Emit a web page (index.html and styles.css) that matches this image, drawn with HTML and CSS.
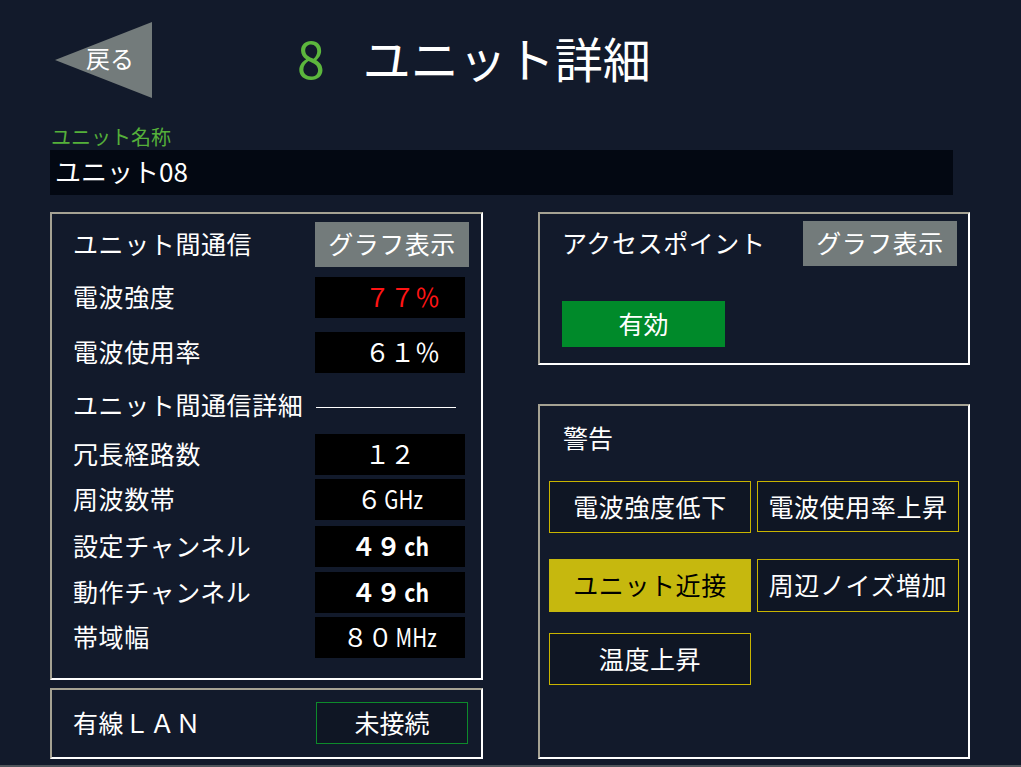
FILE: index.html
```html
<!DOCTYPE html>
<html lang="ja">
<head>
<meta charset="utf-8">
<title>ユニット詳細</title>
<link rel="stylesheet" href="styles.css">
</head>
<body>
<div class="page">
  <header class="header">
    <button class="back"><span class="back-text">戻る</span></button>
    <h1 class="title"><span class="title-num">8</span><span class="title-name">ユニット詳細</span></h1>
  </header>

  <section class="name-field">
    <div class="field-label">ユニット名称</div>
    <div class="field-box">ユニット08</div>
  </section>

  <main class="columns">
    <div class="col col-left">
      <section class="panel panel-comm">
        <div class="row row-head">
          <span class="label">ユニット間通信</span>
          <button class="btn-gray">グラフ表示</button>
        </div>
        <div class="row row-a">
          <span class="label">電波強度</span>
          <span class="value right red">７７％</span>
        </div>
        <div class="row row-b">
          <span class="label">電波使用率</span>
          <span class="value right">６１％</span>
        </div>
        <div class="row row-sub">
          <span class="label">ユニット間通信詳細</span>
          <span class="rule"></span>
        </div>
        <div class="row row-c">
          <span class="label">冗長経路数</span>
          <span class="value">１２</span>
        </div>
        <div class="row row-d">
          <span class="label">周波数帯</span>
          <span class="value">６<span class="unit">GHz</span></span>
        </div>
        <div class="row row-e">
          <span class="label">設定チャンネル</span>
          <span class="value bold">４９<span class="unit unit-ch">ch</span></span>
        </div>
        <div class="row row-f">
          <span class="label">動作チャンネル</span>
          <span class="value bold">４９<span class="unit unit-ch">ch</span></span>
        </div>
        <div class="row row-g">
          <span class="label">帯域幅</span>
          <span class="value">８０<span class="unit">MHz</span></span>
        </div>
      </section>

      <section class="panel panel-lan">
        <span class="label">有線ＬＡＮ</span>
        <span class="status-box">未接続</span>
      </section>
    </div>

    <div class="col col-right">
      <section class="panel panel-ap">
        <div class="row row-head">
          <span class="label">アクセスポイント</span>
          <button class="btn-gray">グラフ表示</button>
        </div>
        <button class="btn-green">有効</button>
      </section>

      <section class="panel panel-warn">
        <div class="warn-title">警告</div>
        <div class="warn-row warn-row-1">
          <span class="warn">電波強度低下</span>
          <span class="warn warn-short">電波使用率上昇</span>
        </div>
        <div class="warn-row warn-row-2">
          <span class="warn warn-on">ユニット近接</span>
          <span class="warn">周辺ノイズ増加</span>
        </div>
        <div class="warn-row warn-row-3">
          <span class="warn">温度上昇</span>
        </div>
      </section>
    </div>
  </main>
</div>
</body>
</html>
```

FILE: styles.css
```css
html {
  background: #50565c;
}
body {
  margin: 0;
  height: 765px;
  overflow: hidden;
  background: #121a2b;
  color: #ffffff;
  font-family: "Noto Sans CJK JP", "Noto Sans", sans-serif;
}
.page {
  padding: 22px 0 0 50px;
}

/* header */
.header {
  display: flex;
  align-items: center;
  height: 76px;
}
.back {
  position: relative;
  width: 97px;
  height: 76px;
  margin: 0 0 0 5px;
  padding: 0 0 0 31px;
  border: none;
  background: transparent;
  color: #ffffff;
  font-family: inherit;
  font-size: 24px;
  text-align: left;
  display: flex;
  align-items: center;
}
.back::before {
  content: "";
  position: absolute;
  inset: 0;
  background: #737b7b;
  clip-path: polygon(0 50%, 100% 0, 100% 100%);
}
.back-text {
  position: relative;
  line-height: 1;
  margin-bottom: 4px;
}
.title {
  margin: -6px 0 0 145px;
  font-weight: normal;
  display: flex;
  align-items: center;
  line-height: 1;
}
.title-num {
  color: #5cb73d;
  font-size: 50px;
}
.title-name {
  font-size: 48px;
  margin-left: 38px;
}

/* name field */
.name-field {
  margin-top: 27px;
}
.field-label {
  color: #55b03a;
  font-size: 20px;
  line-height: 24px;
  height: 24px;
  padding-left: 1px;
}
.field-box {
  margin-top: 1px;
  width: 903px;
  height: 45px;
  box-sizing: border-box;
  padding: 0 0 3px 5px;
  background: #030812;
  font-size: 26px;
  line-height: 42px;
}

/* columns */
.columns {
  display: grid;
  grid-template-columns: 433px 432px;
  column-gap: 55px;
  margin-top: 17px;
}
.col {
  display: flex;
  flex-direction: column;
}
.col-left {
  gap: 8px;
}
.col-right {
  gap: 39px;
}
.panel {
  box-sizing: border-box;
  border: 2px solid #ffffff;
  border-top-color: #a5a293;
  border-left-color: #a5a293;
}
.label {
  font-size: 25px;
  letter-spacing: 0.6px;
  white-space: nowrap;
  padding-bottom: 3px;
}
.row {
  display: flex;
  align-items: center;
  justify-content: space-between;
}

/* left panel */
.panel-comm {
  height: 468px;
  padding: 8px 12px 0 21px;
}
.row-head {
  height: 45px;
}
.btn-gray {
  width: 154px;
  height: 45px;
  border: none;
  background: #737b7b;
  color: #ffffff;
  font-family: inherit;
  font-size: 25px;
  letter-spacing: 0.5px;
  padding: 0 0 3px;
}
.value {
  width: 150px;
  height: 41px;
  margin-right: 4px;
  background: #000000;
  font-size: 25px;
  line-height: 39px;
  text-align: center;
  white-space: nowrap;
}
.value.right {
  text-align: right;
  padding-right: 25px;
  box-sizing: border-box;
}
.value.red {
  color: #ff1414;
}
.value.bold {
  font-weight: bold;
}
.unit {
  display: inline-block;
  transform: scaleX(0.82);
  margin: 0 -4px 0 -2px;
}
.unit-ch {
  transform: scaleX(0.85);
  margin: 0 -2px 0 1px;
}
.row-a { height: 41px; margin-top: 10px; }
.row-b { height: 41px; margin-top: 14px; }
.row-sub { height: 40px; margin-top: 12px; }
.row-c { height: 41px; margin-top: 9px; }
.row-d { height: 41px; margin-top: 4px; }
.row-e { height: 41px; margin-top: 6px; }
.row-f { height: 41px; margin-top: 5px; }
.row-g { height: 41px; margin-top: 4px; }
.rule {
  width: 140px;
  height: 1px;
  background: #ffffff;
  margin: 4px 13px 0 0;
}

.panel-lan {
  height: 71px;
  display: flex;
  align-items: center;
  justify-content: space-between;
  padding: 0 13px 0 21px;
}
.status-box {
  width: 152px;
  height: 42px;
  box-sizing: border-box;
  border: 1px solid #0d8a2b;
  background: #0f1624;
  font-size: 25px;
  line-height: 38px;
  text-align: center;
  margin-top: -2px;
}

/* right panels */
.panel-ap {
  height: 153px;
  padding: 7px 11px 0 22px;
}
.btn-green {
  display: block;
  width: 163px;
  height: 46px;
  margin-top: 35px;
  border: none;
  padding: 0 0 3px;
  background: #008a2a;
  color: #ffffff;
  font-family: inherit;
  font-size: 25px;
}

.panel-warn {
  height: 355px;
  padding: 17px 0 0 9px;
}
.warn-title {
  height: 30px;
  line-height: 28px;
  font-size: 25px;
  padding-left: 14px;
}
.warn-row {
  display: flex;
  gap: 6px;
}
.warn-row-1 { margin-top: 28px; }
.warn-row-2 { margin-top: 26px; }
.warn-row-3 { margin-top: 21px; }
.warn {
  width: 202px;
  height: 52px;
  box-sizing: border-box;
  border: 1px solid #c8b400;
  background: #0f1624;
  font-size: 25px;
  letter-spacing: 0.6px;
  line-height: 48px;
  text-align: center;
  white-space: nowrap;
}
.warn-short {
  height: 51px;
}
.warn-row-2 .warn {
  height: 53px;
  line-height: 49px;
}
.warn-on {
  background: #c6b80e;
  border-color: #c6b80e;
  color: #000000;
}
```
